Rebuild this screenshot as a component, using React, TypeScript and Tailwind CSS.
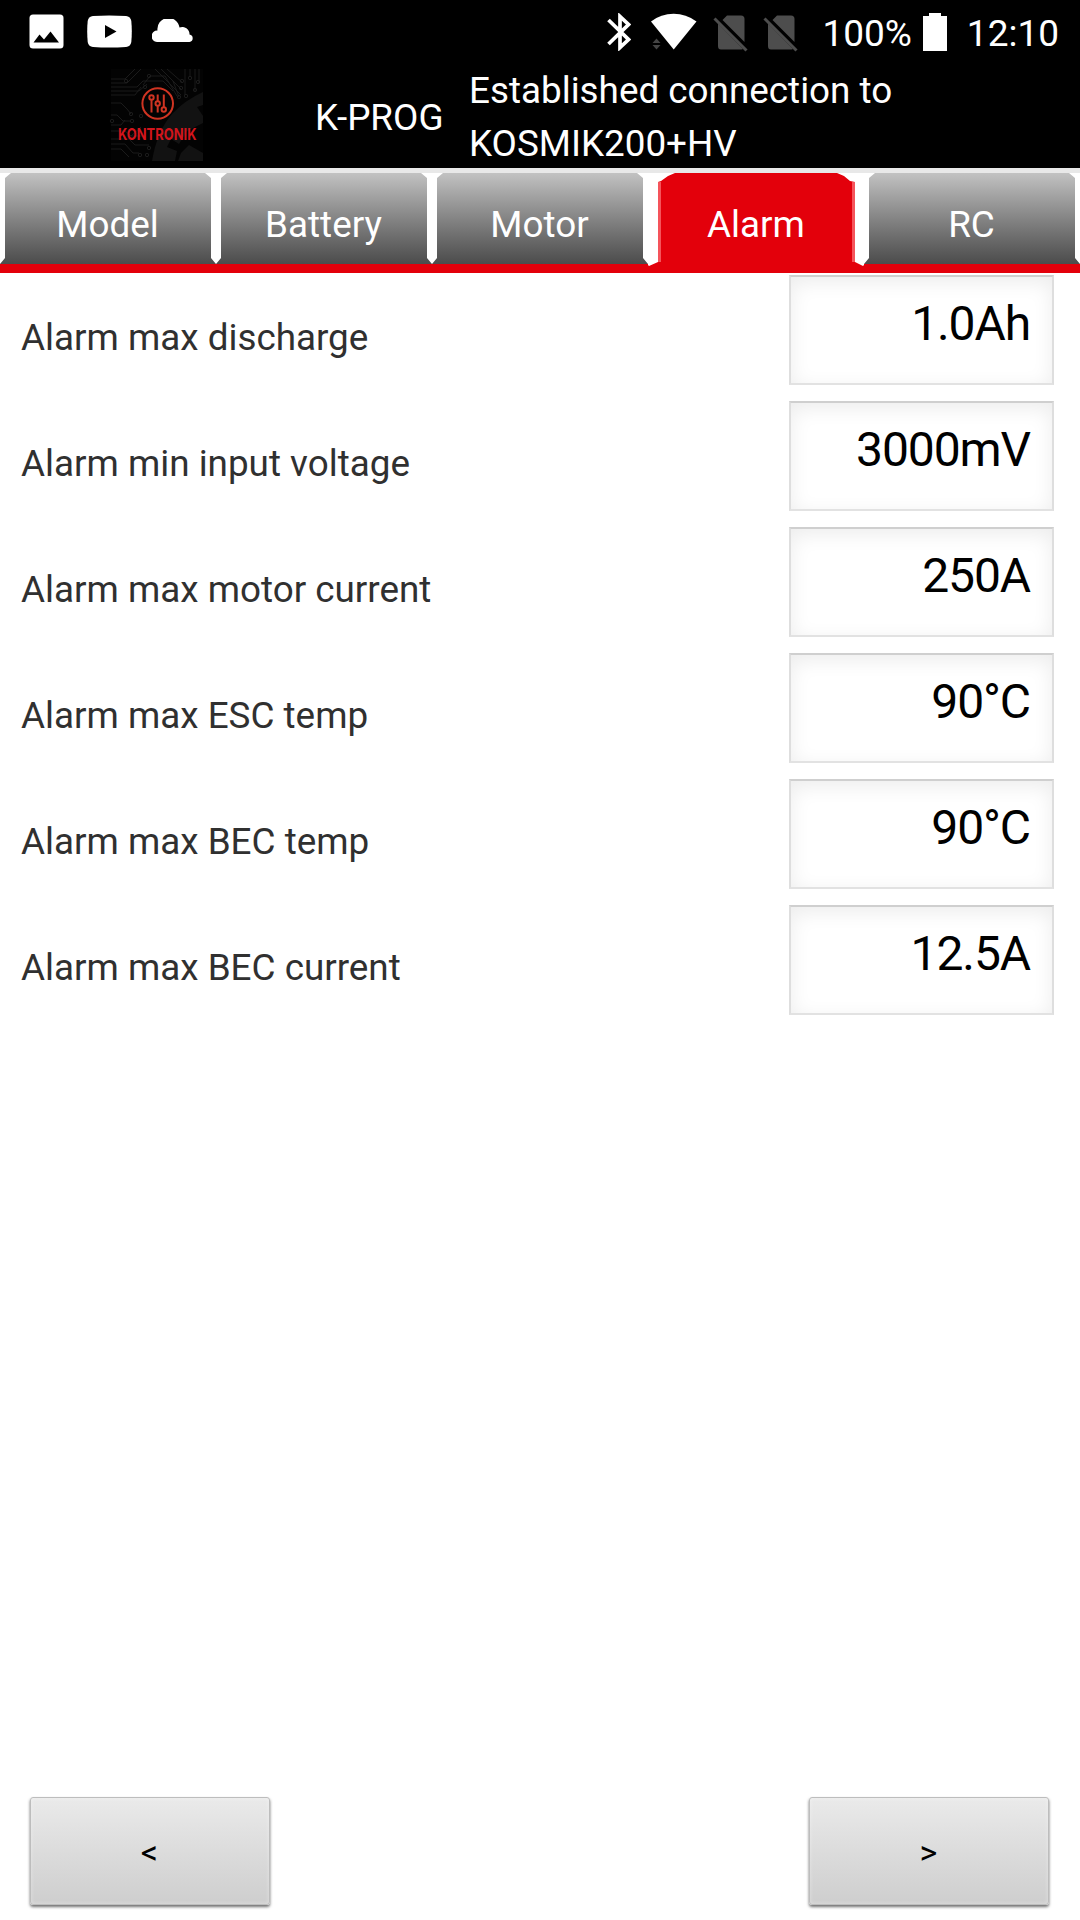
import React from "react";

const tabs = ["Model", "Battery", "Motor", "Alarm", "RC"];

const rows = [
  ["Alarm max discharge", "1.0Ah"],
  ["Alarm min input voltage", "3000mV"],
  ["Alarm max motor current", "250A"],
  ["Alarm max ESC temp", "90°C"],
  ["Alarm max BEC temp", "90°C"],
  ["Alarm max BEC current", "12.5A"],
];

function ImageIcon() {
  return (
    <svg className="ml-[29px] h-[35px] w-[35px]" viewBox="0 0 35 35">
      <rect x="0.5" y="0.5" width="34" height="34" rx="3.5" fill="#fff" />
      <path d="M4.5 28.5L10.5 20.5L15 25.5L21.5 17.5L30 28.5Z" fill="#000" />
    </svg>
  );
}

function VideoIcon() {
  return (
    <svg className="ml-[23px] h-[33px] w-[45px]" viewBox="0 0 45 33">
      <path d="M6 1Q22 0 39 1Q43.500 1.500 44.300 6Q45.300 16 44.300 27Q43.500 31.500 39 32Q22 33 6 32Q1.500 31.500 0.700 27Q-0.300 16 0.700 6Q1.500 1.500 6 1Z" fill="#fff" />
      <path d="M18 10L29.500 16.500L18 23Z" fill="#000" />
    </svg>
  );
}

function CloudIcon() {
  return (
    <svg className="mt-[-1px] ml-5 h-[23px] w-[41px]" viewBox="0 0 41 23">
      <path d="M5 23A5.600 5.600 0 0 1 5.500 11.600A11 11 0 0 1 27.500 8.500A7.200 7.200 0 0 1 37.500 15.500A3.800 3.800 0 0 1 37.500 23Z" fill="#fff" />
    </svg>
  );
}

function BluetoothIcon() {
  return (
    <svg className="ml-[19px] h-[38px] w-6" viewBox="0 0 24 38">
      <path d="M1.500 7L21.500 26.500L13 34.500V3.500L21.500 11.500L1.500 31" fill="none" stroke="#fff" strokeWidth="3.700" />
    </svg>
  );
}

function WifiIcon() {
  return (
    <svg className="ml-5 h-[37px] w-[46px]" viewBox="0 0 46 37">
      <path d="M0 8.500Q10 0.800 22.700 0.800Q35 0.800 45.500 8.500L22.700 36.500Z" fill="#fff" />
      <path d="M1.500 30L5.500 25.500L9.500 30ZM1.500 32L5.500 36.500L9.500 32Z" fill="#444" />
    </svg>
  );
}

function NoSimIcon() {
  return (
    <svg className="h-[38px] w-[35px]" viewBox="0 0 35 38">
      <path d="M9.500 6L14 1.500H28Q31.500 1.500 31.500 5V28ZM5 9.500L30 35Q29 35.500 27 35.500H8Q5 35.500 5 32Z" fill="#4d4d4d" />
      <path d="M1.500 4.500L33.500 36.500" stroke="#4d4d4d" strokeWidth="3" />
    </svg>
  );
}

function BatteryIcon() {
  return (
    <svg className="ml-[11px] h-[38px] w-6" viewBox="0 0 24 38">
      <path d="M0 3H6V0H18V3H24V38H0Z" fill="#fff" />
    </svg>
  );
}

function Logo() {
  return (
    <svg className="h-[92px] w-[92px] overflow-visible" viewBox="0 0 92 92">
      <rect width="92" height="92" fill="#030303" />
      <g fill="none" stroke="#1e1e1e" strokeWidth="0.9">
        <path d="M0 10H14L24 0M0 14H16L30 0M0 18H26L32 12H52L62 22M0 22H28L36 15M0 26H24L30 18M0 34H10L16 40L20 45M0 46H6L12 52H20M0 56H10L14 51M0 62H14L20 67H32M0 70H18L24 76H38M0 75H14L22 84H28M0 80H10L18 88M39 7H54L66 27M44 0L70 26M50 0L70 20M56 0L72 14M74 0V26M79 0V8M84 0V22M88 0V14M39 7L32 16M62 12L68 28M20 67L30 58" />
        <circle cx="15" cy="12" r="1.700" />
        <circle cx="38" cy="7" r="1.700" />
        <circle cx="34" cy="18" r="1.700" />
        <circle cx="20" cy="45" r="1.700" />
        <circle cx="21" cy="52" r="1.700" />
        <circle cx="1" cy="52" r="1.700" />
        <circle cx="30" cy="47" r="1.700" />
        <circle cx="71" cy="12" r="1.700" />
        <circle cx="70" cy="19" r="1.700" />
        <circle cx="79" cy="9" r="1.700" />
        <circle cx="87" cy="13" r="1.700" />
        <circle cx="84" cy="21" r="1.700" />
        <circle cx="68" cy="28" r="1.700" />
        <circle cx="75" cy="27" r="1.700" />
        <circle cx="38" cy="79" r="1.700" />
        <circle cx="29" cy="86" r="1.700" />
        <circle cx="36" cy="86" r="1.700" />
      </g>
      <path d="M92 23Q74 31 61 45Q46 62 41 92H64L66 82L56 78L60 70L68 75L76 62L92 54V47L86 38L92 36ZM70 84L78 76L92 84V92H67Z" fill="#121212" />
      <g fill="none" stroke="#cf3422" strokeWidth="2">
        <circle cx="46.700" cy="34.500" r="15.300" />
        <circle cx="40.500" cy="28.500" r="2.200" />
        <circle cx="46.700" cy="34.500" r="2.200" />
        <circle cx="52.800" cy="40.500" r="2.200" />
        <path d="M40.500 31V43.500M46.700 25.500V32M46.700 37V43.500M52.800 25.500V38" />
      </g>
      <text x="7" y="70.500" textLength="78.500" lengthAdjust="spacingAndGlyphs" fill="#d2151c" fontFamily="Inter, sans-serif" fontWeight="700" fontSize="16.500">KONTRONIK</text>
    </svg>
  );
}

function StatusBar() {
  return (
    <div className="flex h-[68px] justify-between text-[37px] leading-none text-white">
      <div className="flex h-[62px] items-center">
        <ImageIcon />
        <VideoIcon />
        <CloudIcon />
      </div>
      <div className="flex h-[63px] items-center pr-[21px]">
        <BluetoothIcon />
        <WifiIcon />
        <div className="ml-4 flex gap-[15px] pt-0.5">
          <NoSimIcon />
          <NoSimIcon />
        </div>
        <span className="ml-6 pt-1">100%</span>
        <BatteryIcon />
        <span className="ml-5 pt-1">12:10</span>
      </div>
    </div>
  );
}

function Tab({ label, active }: { label: string; active: boolean }) {
  if (active) {
    return (
      <div className="bg-white">
        <button className="h-[100px] w-[216px] bg-[#e3000b] bg-[linear-gradient(#f5545b,#f5545b),linear-gradient(#f5545b,#f5545b)] bg-[length:3px_80px] bg-[position:10px_9px,204px_9px] bg-no-repeat pt-[3px] text-white [clip-path:polygon(10px_9px,13px_8px,20px_3px,27px_0,189px_0,196px_3px,202px_8px,207px_9px,207px_89px,215px_93px,216px_92px,216px_100px,0_100px,0_92px,1px_93px,10px_89px)]">
          {label}
        </button>
      </div>
    );
  }
  return (
    <button className="mb-[9px] h-[91px] w-[216px] bg-linear-to-b from-[#c2c2c2] to-[#4c4c4c] pt-3 pr-px text-white [clip-path:polygon(11px_0,205px_0,211px_5px,211px_85px,216px_91px,0_91px,5px_85px,5px_5px)]">
      {label}
    </button>
  );
}

export default function App() {
  return (
    <div className="flex h-[1920px] w-[1080px] flex-col bg-white font-[Roboto,sans-serif] text-[36.85px]">
      <header className="h-[168px] bg-black text-white">
        <StatusBar />
        <div className="flex h-[100px] items-center">
          <div className="ml-[111px] pb-1.5">
            <Logo />
          </div>
          <span className="ml-[112px] w-[154px]">K-PROG</span>
          <p className="w-[500px] pb-0.5 leading-[53px]">Established connection to KOSMIK200+HV</p>
        </div>
      </header>
      <nav className="h-[105px] border-t-[5px] border-[#e8e8e8]">
        <div className="flex bg-[linear-gradient(to_bottom,white_91px,#e3000b_91px)]">
          {tabs.map((t) => (
            <Tab key={t} label={t} active={t === "Alarm"} />
          ))}
        </div>
      </nav>
      <main className="flex flex-1 flex-col pt-0.5">
        {rows.map(([label, value]) => (
          <div key={label} className="flex h-[126px] items-start justify-between pr-[26px] pl-[21px]">
            <span className="pt-[42px] leading-[42px] text-[#303030]">{label}</span>
            <div className="h-[110px] w-[265px] border-2 border-t-[#cfcfcf] border-r-[#dedede] border-b-[#e2e2e2] border-l-[#dedede] pt-[17px] pr-[22px] text-right text-[48px] leading-[60px] tracking-[-1.1px] text-black shadow-[inset_0_5px_20px_#00000014]">
              {value}
            </div>
          </div>
        ))}
      </main>
      <footer className="flex justify-between pr-[31px] pb-[15px] pl-[30px]">
        {["<", ">"].map((s) => (
          <button
            key={s}
            className="h-[108px] w-60 rounded-[3px] border border-[#bdbdbd] bg-linear-to-b from-[#eaeaea] to-[#cecece] pt-0.5 pr-px text-[34px] text-black shadow-[0_2px_3px_#00000090,inset_0_0_4px_#ffffff60]"
          >
            {s}
          </button>
        ))}
      </footer>
    </div>
  );
}
